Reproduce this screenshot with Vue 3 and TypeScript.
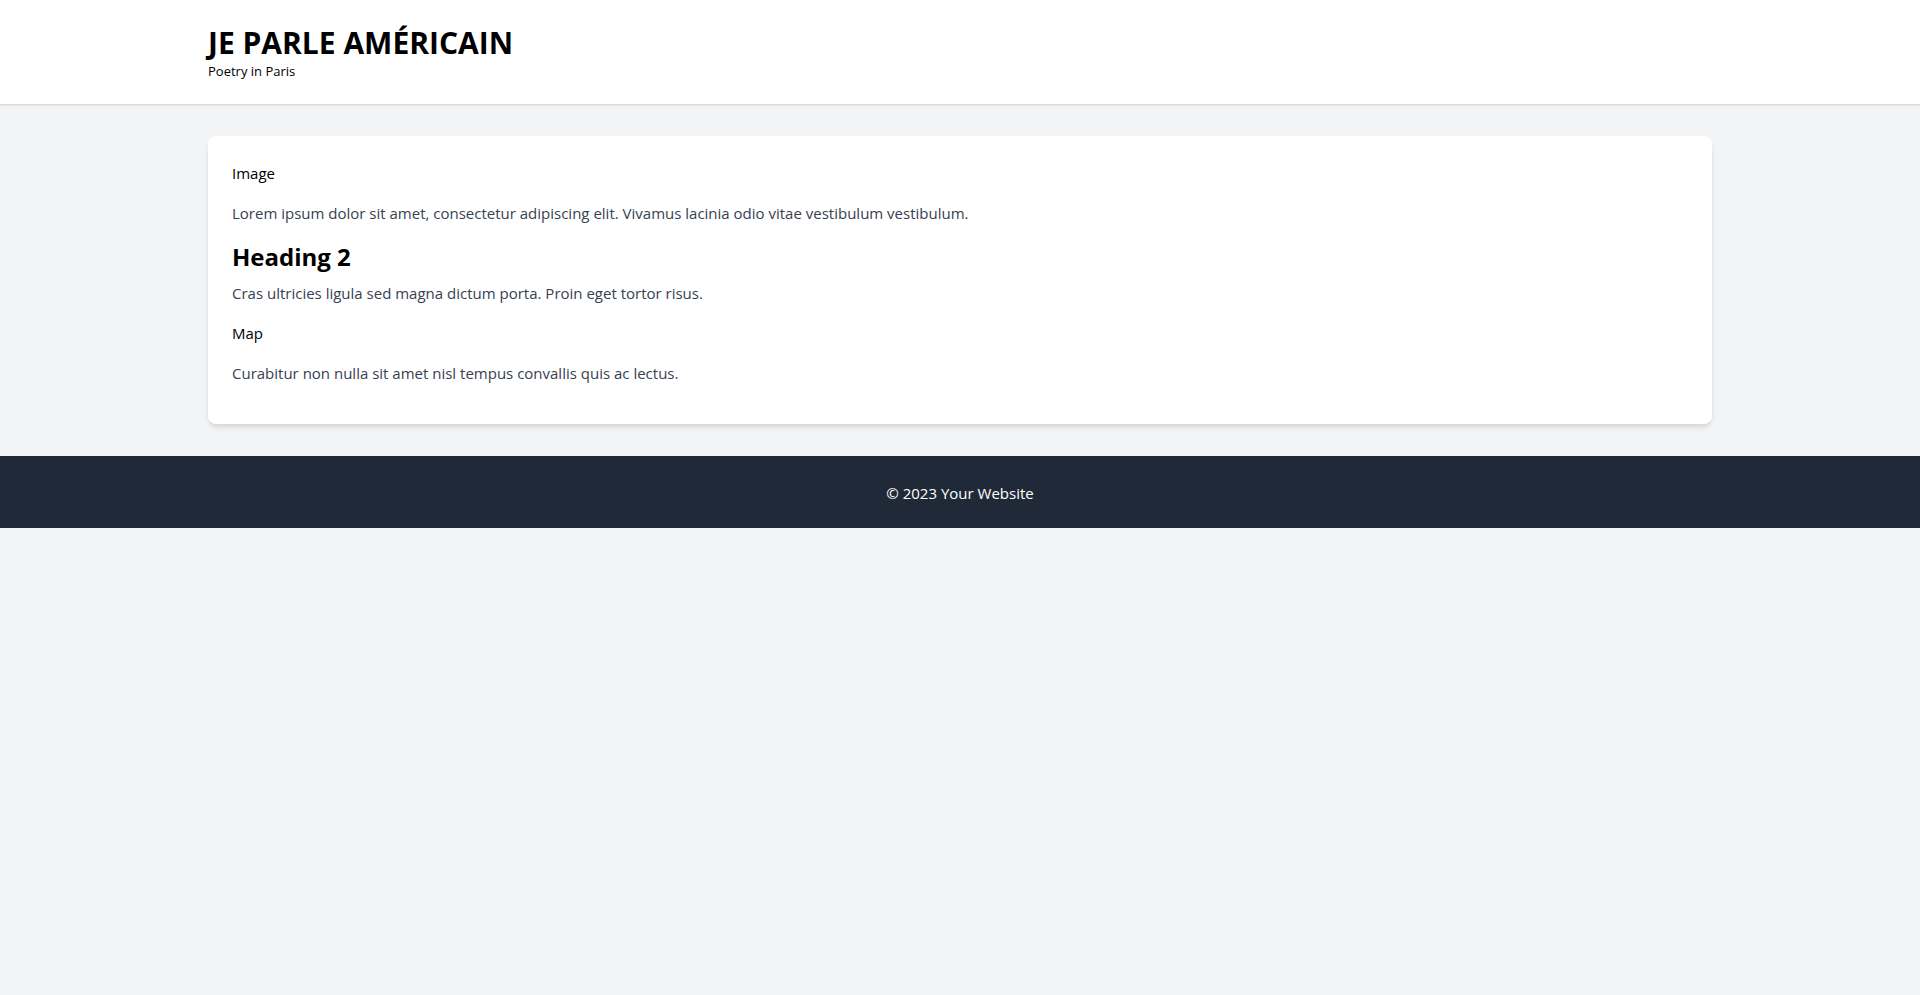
<script setup lang="ts">
interface Block {
  kind: 'label' | 'text' | 'heading'
  content: string
}

const blocks: Block[] = [
  { kind: 'label', content: 'Image' },
  { kind: 'text', content: 'Lorem ipsum dolor sit amet, consectetur adipiscing elit. Vivamus lacinia odio vitae vestibulum vestibulum.' },
  { kind: 'heading', content: 'Heading 2' },
  { kind: 'text', content: 'Cras ultricies ligula sed magna dictum porta. Proin eget tortor risus.' },
  { kind: 'label', content: 'Map' },
  { kind: 'text', content: 'Curabitur non nulla sit amet nisl tempus convallis quis ac lectus.' },
]
</script>

<template>
  <div class="page">
    <header class="site-header">
      <div class="container">
        <h1 class="title">JE PARLE AMÉRICAIN</h1>
        <p class="tagline">Poetry in Paris</p>
      </div>
    </header>
    <main class="container main">
      <article class="card">
        <template v-for="block in blocks" :key="block.content">
          <h2 v-if="block.kind === 'heading'" class="heading">{{ block.content }}</h2>
          <div v-else-if="block.kind === 'label'" class="label">{{ block.content }}</div>
          <p v-else class="text">{{ block.content }}</p>
        </template>
      </article>
    </main>
    <footer class="site-footer">
      <p>© 2023 Your Website</p>
    </footer>
  </div>
</template>

<style>
body {
  margin: 0;
  background: #f3f4f6;
}
</style>

<style scoped>
.page {
  color: #000;
  font-family: "Segoe UI", "Open Sans", "Noto Sans", sans-serif;
  font-size: 15px;
  line-height: 24px;
}
h1, h2, p {
  margin: 0;
}
.container {
  box-sizing: border-box;
  max-width: 1536px;
  margin: 0 auto;
  padding: 0 16px;
}
.site-header {
  padding: 25px 0 23px;
  background: #fff;
  box-shadow: 0 1px 3px rgba(0, 0, 0, 0.1), 0 1px 2px rgba(0, 0, 0, 0.06);
}
.title {
  font-size: 30px;
  line-height: 36px;
  font-weight: 700;
}
.tagline {
  font-size: 13px;
  line-height: 20px;
}
.main {
  padding-top: 32px;
  padding-bottom: 32px;
}
.card {
  padding: 25px 24px 23px;
  border-radius: 8px;
  background: #fff;
  box-shadow: 0 4px 6px -1px rgba(0, 0, 0, 0.1), 0 2px 4px -1px rgba(0, 0, 0, 0.06);
}
.label {
  margin-bottom: 16px;
}
.text {
  margin-bottom: 16px;
  color: #374151;
}
.heading {
  margin-bottom: 8px;
  font-size: 24px;
  line-height: 32px;
  font-weight: 700;
}
.site-footer {
  padding: 25px 16px 23px;
  background: #1f2937;
  color: #fff;
  text-align: center;
}
</style>
